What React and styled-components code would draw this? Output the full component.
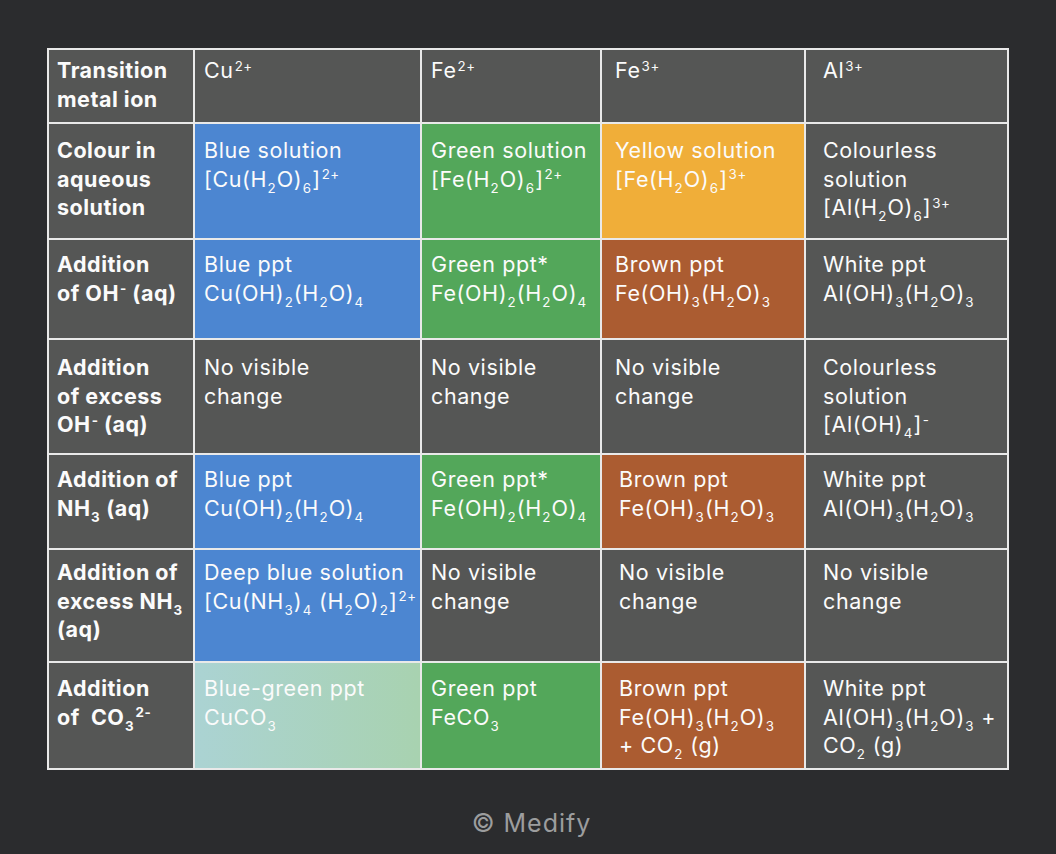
import React from 'react';
import styled, { createGlobalStyle, css } from 'styled-components';

const GlobalStyle = createGlobalStyle`
  html, body {
    margin: 0;
    padding: 0;
    background: #2b2c2e;
  }
  body {
    font-family: Inter, "Noto Sans", "Liberation Sans", sans-serif;
  }
`;

const fills = {
  gray: css`background: #555655;`,
  blue: css`background: #4c86d1;`,
  green: css`background: #53a75a;`,
  yellow: css`background: #f0ae39;`,
  brown: css`background: #ab5c31;`,
  mint: css`background: linear-gradient(90deg, #abd3d3 0%, #a8d2b0 100%);`,
};

const rowHeights = [72, 114, 98, 113, 93, 111, 105];
const rowPads = [6, 12, 10, 13, 10, 8, 11];

const Page = styled.div`
  width: 1056px;
  height: 854px;
  padding-top: 48px;
  box-sizing: border-box;
  display: flex;
  flex-direction: column;
  align-items: center;
`;

const Table = styled.div`
  display: grid;
  grid-template-columns: 144px 225px 178px 202px 201px;
  grid-template-rows: ${rowHeights.map((h) => h + 'px').join(' ')};
  gap: 2px;
  padding: 2px;
  background: #e9e9e9;
`;

const Cell = styled.div`
  ${(p) => fills[p.$fill || 'gray']}
  padding: ${(p) => p.$top}px 6px 0 ${(p) => p.$left || 9}px;
  color: #fbfbfb;
  font-size: 21.5px;
  line-height: 28.5px;
  letter-spacing: 0.6px;
  font-weight: 400;
  white-space: nowrap;
`;

const HeadCell = styled(Cell)`
  padding-left: 8px;
  font-weight: 700;
  letter-spacing: 0.5px;
`;

const Sub = styled.span`
  font-size: 0.62em;
  line-height: 0;
  position: relative;
  top: 0.48em;
  margin: 0 0.5px;
`;

const Sup = styled.span`
  font-size: 0.62em;
  line-height: 0;
  position: relative;
  top: -0.55em;
  margin-left: 1px;
`;

const Footer = styled.div`
  margin-top: 38px;
  margin-left: 7px;
  color: #9c9d9e;
  font-size: 25px;
  letter-spacing: 1px;
`;

const noChange = <>No visible<br />change</>;

const rows = [
  {
    head: <>Transition<br />metal ion</>,
    cells: [
      { c: <>Cu<Sup>2+</Sup></> },
      { c: <>Fe<Sup>2+</Sup></> },
      { c: <>Fe<Sup>3+</Sup></>, left: 13 },
      { c: <>Al<Sup>3+</Sup></>, left: 17 },
    ],
  },
  {
    head: <>Colour in<br />aqueous<br />solution</>,
    cells: [
      { fill: 'blue', c: <>Blue solution<br />[Cu(H<Sub>2</Sub>O)<Sub>6</Sub>]<Sup>2+</Sup></> },
      { fill: 'green', c: <>Green solution<br />[Fe(H<Sub>2</Sub>O)<Sub>6</Sub>]<Sup>2+</Sup></> },
      { fill: 'yellow', c: <>Yellow solution<br />[Fe(H<Sub>2</Sub>O)<Sub>6</Sub>]<Sup>3+</Sup></>, left: 13 },
      { c: <>Colourless<br />solution<br />[Al(H<Sub>2</Sub>O)<Sub>6</Sub>]<Sup>3+</Sup></>, left: 17 },
    ],
  },
  {
    head: <>Addition<br />of OH<Sup>-</Sup> (aq)</>,
    cells: [
      { fill: 'blue', c: <>Blue ppt<br />Cu(OH)<Sub>2</Sub>(H<Sub>2</Sub>O)<Sub>4</Sub></> },
      { fill: 'green', c: <>Green ppt*<br />Fe(OH)<Sub>2</Sub>(H<Sub>2</Sub>O)<Sub>4</Sub></> },
      { fill: 'brown', c: <>Brown ppt<br />Fe(OH)<Sub>3</Sub>(H<Sub>2</Sub>O)<Sub>3</Sub></>, left: 13 },
      { c: <>White ppt<br />Al(OH)<Sub>3</Sub>(H<Sub>2</Sub>O)<Sub>3</Sub></>, left: 17 },
    ],
  },
  {
    head: <>Addition<br />of excess<br />OH<Sup>-</Sup> (aq)</>,
    cells: [
      { c: noChange },
      { c: noChange },
      { c: noChange, left: 13 },
      { c: <>Colourless<br />solution<br />[Al(OH)<Sub>4</Sub>]<Sup>-</Sup></>, left: 17 },
    ],
  },
  {
    head: <>Addition of<br />NH<Sub>3</Sub> (aq)</>,
    cells: [
      { fill: 'blue', c: <>Blue ppt<br />Cu(OH)<Sub>2</Sub>(H<Sub>2</Sub>O)<Sub>4</Sub></> },
      { fill: 'green', c: <>Green ppt*<br />Fe(OH)<Sub>2</Sub>(H<Sub>2</Sub>O)<Sub>4</Sub></> },
      { fill: 'brown', c: <>Brown ppt<br />Fe(OH)<Sub>3</Sub>(H<Sub>2</Sub>O)<Sub>3</Sub></>, left: 17 },
      { c: <>White ppt<br />Al(OH)<Sub>3</Sub>(H<Sub>2</Sub>O)<Sub>3</Sub></>, left: 17 },
    ],
  },
  {
    head: <>Addition of<br />excess NH<Sub>3</Sub><br />(aq)</>,
    cells: [
      { fill: 'blue', c: <>Deep blue solution<br />[Cu(NH<Sub>3</Sub>)<Sub>4</Sub> (H<Sub>2</Sub>O)<Sub>2</Sub>]<Sup>2+</Sup></> },
      { c: noChange },
      { c: noChange, left: 17 },
      { c: noChange, left: 17 },
    ],
  },
  {
    head: <>Addition<br />of&nbsp; CO<Sub>3</Sub><Sup>2-</Sup></>,
    cells: [
      { fill: 'mint', c: <>Blue-green ppt<br />CuCO<Sub>3</Sub></> },
      { fill: 'green', c: <>Green ppt<br />FeCO<Sub>3</Sub></> },
      { fill: 'brown', c: <>Brown ppt<br />Fe(OH)<Sub>3</Sub>(H<Sub>2</Sub>O)<Sub>3</Sub><br />+ CO<Sub>2</Sub> (g)</>, left: 17 },
      { c: <>White ppt<br />Al(OH)<Sub>3</Sub>(H<Sub>2</Sub>O)<Sub>3</Sub> +<br />CO<Sub>2</Sub> (g)</>, left: 17 },
    ],
  },
];

export default function App() {
  return (
    <>
      <GlobalStyle />
      <Page>
        <Table>
          {rows.map((row, i) => (
            <React.Fragment key={i}>
              <HeadCell $top={rowPads[i]}>{row.head}</HeadCell>
              {row.cells.map((cell, j) => (
                <Cell key={j} $fill={cell.fill} $left={cell.left} $top={rowPads[i]}>
                  {cell.c}
                </Cell>
              ))}
            </React.Fragment>
          ))}
        </Table>
        <Footer>© Medify</Footer>
      </Page>
    </>
  );
}
